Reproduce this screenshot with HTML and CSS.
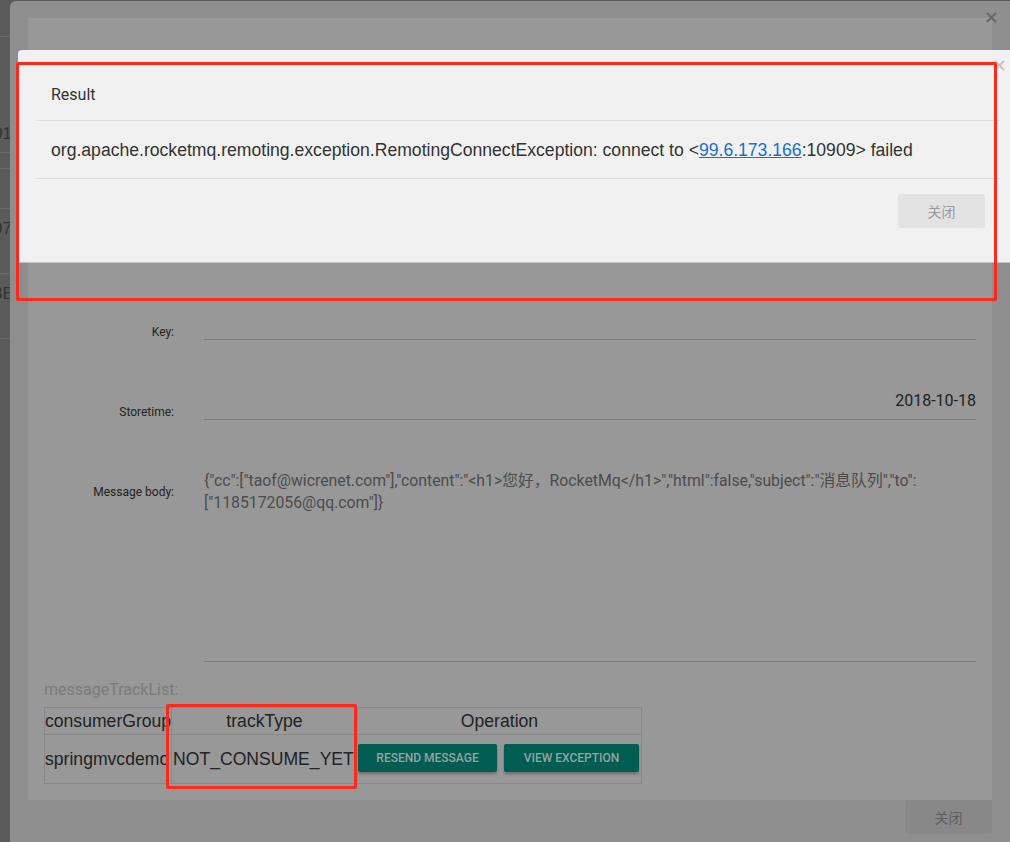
FILE: index.html
```html
<!DOCTYPE html>
<html lang="zh">
<head>
<meta charset="utf-8">
<title>Message Detail</title>
<link rel="stylesheet" href="styles.css">
</head>
<body>
<div class="page">
  <div class="bg-row h36"></div>
  <div class="bg-row h116"><span class="bg-txt">01</span></div>
  <div class="bg-row h16"></div>
  <div class="bg-row h40"></div>
  <div class="bg-row h65"><span class="bg-txt">97</span></div>
  <div class="bg-row h65"><span class="bg-txt">3E</span></div>
</div>

<div class="outer-modal">
  <div class="outer-head">
    <span class="close outer-close"><svg width="11" height="11" viewBox="0 0 11 11"><path d="M1 1L10 10M10 1L1 10" stroke="currentColor" stroke-width="2"/></svg></span>
  </div>
  <div class="outer-body">
    <div class="form">
      <div class="frow"><div class="flabel">Topic:</div><div class="field"></div></div>
      <div class="frow"><div class="flabel">Message ID:</div><div class="field"></div></div>
      <div class="frow"><div class="flabel">Tag:</div><div class="field"></div></div>
      <div class="frow"><div class="flabel">Key:</div><div class="field"></div></div>
      <div class="frow"><div class="flabel">Storetime:</div><div class="field value-right">2018-10-18</div></div>
      <div class="frow"><div class="flabel">Message body:</div><div class="field body-field">{"cc":["taof@wicrenet.com"],"content":"&lt;h1&gt;您好，RocketMq&lt;/h1&gt;","html":false,"subject":"消息队列","to":["1185172056@qq.com"]}</div></div>
    </div>
    <div class="track-title">messageTrackList:</div>
    <table class="track">
      <colgroup><col class="c1"><col class="c2"><col class="c3"></colgroup>
      <thead>
        <tr><th class="left">consumerGroup</th><th>trackType</th><th>Operation</th></tr>
      </thead>
      <tbody>
        <tr>
          <td class="left">springmvcdemo</td>
          <td class="left tt">NOT_CONSUME_YET</td>
          <td class="ops"><div class="ops-in"><button class="mbtn">Resend Message</button><button class="mbtn">View Exception</button></div></td>
        </tr>
      </tbody>
    </table>
  </div>
  <div class="outer-foot"><button class="gbtn dark">关闭</button></div>
</div>

<div class="result-modal">
  <div class="rhead">Result<span class="close result-close"><svg width="11" height="11" viewBox="0 0 11 11"><path d="M1 1L10 10M10 1L1 10" stroke="currentColor" stroke-width="2"/></svg></span></div>
  <div class="rbody">org.apache.rocketmq.remoting.exception.RemotingConnectException: connect to &lt;<a class="ip" href="#">99.6.173.166</a>:10909&gt; failed</div>
  <div class="rfoot"><button class="gbtn light">关闭</button></div>
</div>

<div class="annot a1"></div>
<div class="annot a2"></div>
</body>
</html>
```

FILE: styles.css
```css
* { box-sizing: border-box; }
html, body { margin: 0; padding: 0; }
body {
  width: 1010px;
  height: 842px;
  overflow: hidden;
  position: relative;
  background: #5b5b5b;
  font-family: Roboto, "Liberation Sans", "Noto Sans CJK SC", sans-serif;
}

/* background page (under the overlay) */
.page { display: flex; flex-direction: column; }
.bg-row { border-bottom: 1px solid #6a6a6a; position: relative; display: flex; align-items: flex-end; }
.h36 { height: 37px; }
.h116 { height: 116px; padding-bottom: 8px; }
.h16 { height: 16px; }
.h40 { height: 40px; }
.h65 { height: 65px; padding-bottom: 34px; }
.bg-txt { font-family: "Liberation Sans", sans-serif; font-size: 17px; color: #333; margin-left: -7px; }

/* outer modal */
.outer-modal {
  position: absolute;
  left: 10px; top: 1px; right: 0; bottom: 0;
  background: #8e8e8e;
  border-top-left-radius: 6px;
  display: flex;
  flex-direction: column;
}
.outer-head { height: 17px; position: relative; }
.close { position: absolute; display: block; line-height: 0; }
.outer-close { right: 13px; top: 11px; color: #676767; }
.outer-body {
  margin: 0 18px;
  height: 782px;
  background: #989898;
  padding: 51px 16px 0 16px;
}
.form { display: flex; flex-direction: column; gap: 49px; }
.frow { display: grid; grid-template-columns: 130px 1fr; column-gap: 30px; }
.flabel { text-align: right; font-size: 12px; line-height: 16px; padding-top: 15px; color: #222; }
.field { height: 31px; border-bottom: 1px solid #7c7c7c; }
.value-right { text-align: right; font-size: 16px; line-height: 20px; padding-top: 2px; color: #222; }
.body-field { height: 193px; font-size: 15.8px; line-height: 22px; padding-top: 1px; color: #4c4c4c; }

.track-title { margin-top: 18px; font-size: 16px; line-height: 20px; color: #7b7b7b; }
.track {
  margin-top: 7px;
  border-collapse: collapse;
  table-layout: fixed;
  width: 597px;
  font-family: "Liberation Sans", Arial, sans-serif;
  font-size: 17.6px;
  color: #222;
}
.c1 { width: 127px; }
.c2 { width: 186px; }
.c3 { width: 284px; }
.track th, .track td {
  border: 1px solid #888;
  padding: 0;
  font-weight: normal;
  white-space: nowrap;
  overflow: hidden;
  text-align: center;
}
.track th { height: 27px; }
.track td { height: 49px; }
.track .left { text-align: left; padding-left: 0; }
.track .tt { padding-left: 1px; }
.ops-in { display: flex; gap: 7px; padding: 0 1px 2px 0; }
.mbtn {
  height: 28px;
  border: 0;
  border-radius: 2px;
  background: #015c52;
  color: #95a4a0;
  font-family: Roboto, sans-serif;
  font-weight: 500;
  font-size: 12px;
  text-transform: uppercase;
  box-shadow: 0 2px 3px rgba(0,0,0,0.28);
  padding: 0;
}
.mbtn:first-child { width: 139px; }
.mbtn:last-child { width: 135px; }

.outer-foot { flex: 1; display: flex; justify-content: flex-end; padding-right: 18px; }
.gbtn {
  width: 87px;
  height: 34px;
  border: 0;
  border-radius: 3px;
  font-family: "Noto Sans CJK SC", sans-serif;
  font-size: 14px;
  padding: 0;
}
.gbtn.dark { background: #888; color: #5e5e5e; }
.gbtn.light { background: #e3e3e3; color: #9a9a9a; }

/* result modal */
.result-modal {
  position: absolute;
  left: 18px; top: 50px;
  width: 1000px; height: 212px;
  background: #f1f1f1;
  border-top-left-radius: 4px;
  box-shadow: 0 1px 0 #c4c4c4;
  display: flex;
  flex-direction: column;
}
.rhead {
  position: relative;
  height: 71px;
  margin: 0 18px;
  padding: 35px 0 0 15px;
  font-size: 16px;
  line-height: 20px;
  color: #333;
  border-bottom: 1px solid #dcdcdc;
}
.result-close { right: -5px; top: 10px; color: #c6c6c6; }
.rbody {
  margin: 0 18px;
  padding: 17px 0 16px 15px;
  height: 58px;
  font-family: "Liberation Sans", Arial, sans-serif;
  font-size: 17.6px;
  line-height: 24px;
  color: #333;
  border-bottom: 1px solid #dcdcdc;
}
.ip { color: #1a6fd0; text-decoration: underline; }
.rfoot { display: flex; justify-content: flex-end; padding: 15px 33px 0 0; }

/* red annotation boxes */
.annot { position: absolute; border: 3px solid #fb2a1c; border-radius: 2px; }
.a1 { left: 16px; top: 62px; width: 981px; height: 239px; }
.a2 { left: 166px; top: 704px; width: 191px; height: 85px; }
```
